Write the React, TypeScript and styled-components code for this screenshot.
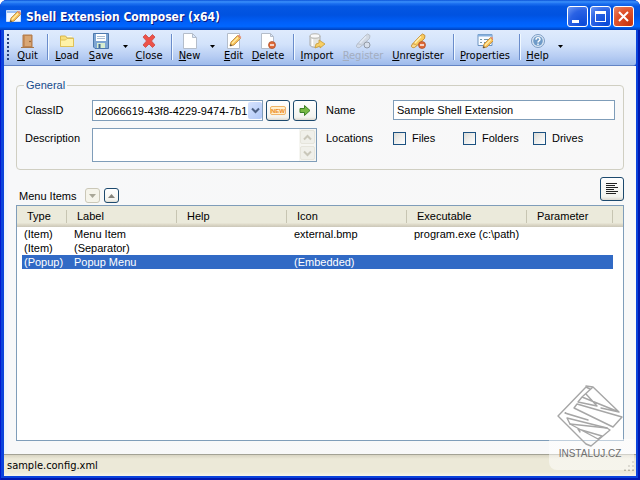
import React from "react";
import styled, { createGlobalStyle, css } from "styled-components";

const GlobalStyle = createGlobalStyle`
  * { box-sizing: border-box; }
  html, body { margin: 0; padding: 0; background: #ffffff; }
  body, button, input, select, textarea, table {
    font-family: "Liberation Sans", Arial, sans-serif;
    font-size: 11px;
    line-height: 14px;
    color: #000000;
  }
`;

const uiFont = `"DejaVu Sans Condensed", "DejaVu Sans", sans-serif`;

const Window = styled.div`
  position: relative;
  display: flex;
  flex-direction: column;
  min-height: 100vh;
  padding: 0 4px 4px;
  border-radius: 7px 7px 0 0;
  background: #0b43dc;
  box-shadow: inset 1px 0 #0019cf, inset -2px 0 #0019b0, inset 0 -2px #0019b0;
`;

const TitleBar = styled.header`
  display: flex;
  align-items: center;
  gap: 4px;
  height: 30px;
  margin: 0 -4px;
  padding: 3px 6px 0;
  border-radius: 7px 7px 0 0;
  background: linear-gradient(
    #0a52d8 0%, #3a90fb 6%, #1c70f0 12%, #0457e2 22%, #0052e0 50%, #0060fa 75%, #0066ff 88%, #0049cc 97%, #003fb8 100%
  );
`;

const Title = styled.h1`
  flex: 1;
  margin: 0;
  color: #ffffff;
  font-family: ${uiFont};
  font-size: 12px;
  font-weight: 700;
  line-height: 18px;
  text-shadow: 1px 1px #0a1883;
  white-space: nowrap;
`;

const Captions = styled.div`
  display: flex;
  gap: 2px;
`;

const CaptionButton = styled.button<{ $close?: boolean }>`
  display: flex;
  width: 21px;
  height: 21px;
  padding: 0;
  border: 1px solid #ffffff;
  border-radius: 3px;
  background: ${(p) =>
    p.$close
      ? "radial-gradient(circle at 80% 90%, #c8340f, #e0532c 60%, #e88a6c)"
      : "radial-gradient(circle at 80% 90%, #0a4ad8, #2a62e4 60%, #6f9af5)"};
`;

const ToolBar = styled.nav`
  display: flex;
  align-items: stretch;
  height: 36px;
  padding: 3px 0 2px 3px;
  border-bottom: 1px solid #6384c4;
  border-radius: 0 0 3px 0;
  background: linear-gradient(#dfebfd 0%, #d3e3fb 40%, #b7cdf3 75%, #9ebbeb 100%);
`;

const Grip = styled.span`
  width: 2px;
  height: 28px;
  margin: 1px 4px 0 0;
  background: repeating-linear-gradient(#27417c 0 2px, transparent 2px 4px);
`;

const ToolButton = styled.button<{ $width: number }>`
  display: flex;
  flex: none;
  flex-direction: column;
  align-items: center;
  width: ${(p) => p.$width}px;
  padding: 0;
  border: 0;
  background: none;
  font-family: ${uiFont};
  white-space: nowrap;

  & svg { flex: none; }
  &:disabled { color: #a3adbf; }
  &:disabled svg { filter: grayscale(1); opacity: 0.5; }
`;

const Key = styled.u`
  text-decoration-thickness: 1px;
  text-underline-offset: 1px;
`;

const DropButton = styled.button`
  flex: none;
  width: 14px;
  padding: 0 0 4px;
  border: 0;
  background: none;
  line-height: 0;
`;

const Divider = styled.span`
  flex: none;
  width: 2px;
  margin: 1px 1px 3px 5px;
  border-left: 1px solid #6a8ccb;
  border-right: 1px solid #f1f9ff;
`;

const Main = styled.main`
  display: flex;
  flex: 1;
  flex-direction: column;
  padding: 12px 12px 13px;
  background: linear-gradient(90deg, #e9f3fc 0, #f7f8f9 5px, #f8f8f8 100%);
`;

const Group = styled.fieldset`
  display: grid;
  grid-template-columns: 67px 225px 76px minmax(0, 1fr);
  row-gap: 7px;
  min-width: 0;
  margin: 0;
  padding: 8px 8px 7px;
  border: 1px solid #d0cfc2;
  border-radius: 4px;
`;

const Legend = styled.legend`
  margin-left: -1px;
  padding: 0 2px;
  color: #154a8b;
`;

const Label = styled.label<{ $indent?: boolean }>`
  padding: 3px 0 3px ${(p) => (p.$indent ? 9 : 0)}px;
`;

const Caption = styled.span`
  padding: 3px 0 3px 9px;
`;

const field = css`
  border: 1px solid #7f9db9;
  border-radius: 0;
  background: #ffffff;
  outline: 0;
`;

const TextBox = styled.input`
  ${field}
  width: 100%;
  height: 20px;
  padding: 0 3px;
`;

const ClassRow = styled.div`
  display: flex;
  gap: 3px;
`;

const Combo = styled.div`
  position: relative;
  flex: 1;
  min-width: 0;
  height: 21px;
`;

const Select = styled.select`
  ${field}
  width: 100%;
  height: 21px;
  padding: 0 14px 0 2px;
  appearance: none;
`;

const ComboArrow = styled.span`
  position: absolute;
  top: 2px;
  right: 1px;
  display: flex;
  width: 14px;
  height: 17px;
  align-items: center;
  justify-content: center;
  border-radius: 2px;
  background: linear-gradient(135deg, #d6e3fe, #b0c8f8);
  pointer-events: none;
`;

const Memo = styled.div`
  position: relative;
  height: 34px;
`;

const TextArea = styled.textarea`
  ${field}
  display: block;
  width: 100%;
  height: 34px;
  padding: 2px 20px 2px 3px;
  resize: none;
  overflow: hidden;
`;

const ScrollBar = styled.div`
  position: absolute;
  inset: 1px 1px 1px auto;
  display: flex;
  flex-direction: column;
  width: 17px;
  background: #f6f6f2;
`;

const ScrollButton = styled.button`
  display: flex;
  flex: 1;
  align-items: center;
  justify-content: center;
  margin: 1px;
  padding: 0;
  border: 1px solid #e6e5dc;
  border-radius: 2px;
  background: #f0f0ea;
`;

const PushButton = styled.button<{ $width: number; $height: number }>`
  display: flex;
  flex: none;
  align-items: center;
  justify-content: center;
  width: ${(p) => p.$width}px;
  height: ${(p) => p.$height}px;
  padding: 0;
  border: 1px solid #1d4a6e;
  border-radius: 3px;
  background: linear-gradient(#ffffff, #f3f3ee 85%, #dcd9cf);

  &:disabled { border-color: #cbc8b8; background: #f5f4ea; }
`;

const Checks = styled.div`
  display: flex;
  padding: 3px 0;
`;

const CheckLabel = styled.label`
  display: flex;
  align-items: center;
  gap: 6px;
  width: 70px;
  height: 14px;
`;

const CheckBox = styled.input`
  width: 13px;
  height: 13px;
  margin: 0;
  appearance: none;
  border: 1px solid #1c5180;
  background: linear-gradient(135deg, #dcdcd7, #ffffff);
`;

const ListBar = styled.div`
  display: flex;
  align-items: flex-end;
  gap: 4px;
  height: 26px;
  margin: 7px 0 2px;
  padding-left: 3px;
`;

const ListTitle = styled.h2`
  width: 62px;
  margin: 0;
  font-size: 11px;
  font-weight: 400;
  line-height: 14px;
`;

const BarEnd = styled.div`
  display: flex;
  flex: 1;
  align-self: flex-start;
  justify-content: flex-end;
`;

const ListView = styled.div`
  flex: 1;
  border: 1px solid #7f9db9;
  background: #ffffff;
  overflow: hidden;
`;

const Table = styled.table`
  width: 100%;
  table-layout: fixed;
  border-collapse: separate;
  border-spacing: 0;
  white-space: nowrap;
`;

const HeadCell = styled.th<{ $width?: number }>`
  width: ${(p) => (p.$width ? `${p.$width}px` : "auto")};
  height: 21px;
  padding: 1px 0 2px 10px;
  background:
    linear-gradient(#c7c5b2, #c7c5b2) right 4px / 1px 13px no-repeat,
    linear-gradient(#ebeadb 80%, #dedac9 88%, #cbc7b8);
  font-weight: 400;
  text-align: left;
`;

const HeadEnd = styled.th`
  width: 10px;
  padding: 0;
  background: linear-gradient(#ebeadb 80%, #dedac9 88%, #cbc7b8);
`;

const Row = styled.tr<{ $selected: boolean }>`
  color: ${(p) => (p.$selected ? "#ffffff" : "#000000")};
  background: ${(p) => (p.$selected ? "#316ac5" : "#ffffff")};
`;

const Cell = styled.td`
  height: 14px;
  padding: 0 0 0 7px;

  &:first-child { padding-left: 2px; border-left: 5px solid #ffffff; }
`;

const EndCell = styled.td`
  padding: 0;
  background: #ffffff;
`;

const StatusBar = styled.footer`
  display: flex;
  align-items: center;
  justify-content: space-between;
  height: 22px;
  padding: 1px 0 0 3px;
  border-top: 1px solid #a3a295;
  background: linear-gradient(#d8d4c2 0, #ece9d8 4px, #ece9d8 17px, #f5f4ec 100%);
  font-family: ${uiFont};
`;

const Watermark = styled.aside`
  position: absolute;
  right: 0;
  bottom: 10px;
  display: flex;
  flex-direction: column;
  align-items: center;
  width: 91px;
  padding: 0 9px 9px 0;
  border-radius: 8px;
  background: linear-gradient(transparent 54px, rgba(255, 255, 255, 0.5) 54px) left / 85px 100% no-repeat;
  color: #6e6e6e;
  font-size: 10px;
  line-height: 14px;
  pointer-events: none;
`;

const Pencil = () => (
  <>
    <path d="M4 13l1-4 6.5-6.5 3 3L8 12z" fill="#f8bf58" stroke="#b98536" strokeWidth=".8" />
    <path d="M6 10.500l6-6" stroke="#fff0a8" strokeWidth="1.300" />
    <path d="M11.500 2.500l3 3 .8-1.500-2.200-2.200z" fill="#e7907a" />
    <path d="M4 13l.6-2 1.500 1.400z" fill="#444" />
  </>
);

const Minus = () => (
  <>
    <circle cx="12" cy="12" r="3.500" fill="#df6a38" stroke="#a84a25" strokeWidth=".7" />
    <path d="M10 12h4" stroke="#fff" strokeWidth="1.400" />
  </>
);

const Form = () => (
  <>
    <path d="M1 1.500h14v11H1z" fill="#f8fbff" stroke="#6b93c0" />
    <path d="M1 1.500h14v2H1z" fill="#86b0df" />
    <path d="M3 6.500h2M3 9.500h2M7 6.500h6M7 9.500h4" stroke="#7397a8" />
  </>
);

const Plug = () => (
  <>
    <path d="M2.500 11l7.500-8 2.500-2 2.500 1.500-.5 3L7 12.500z" fill="#f9ca5e" stroke="#c58f35" />
    <path d="M5 10l6-6.500" stroke="#fff1b4" strokeWidth="1.500" />
    <path d="M2.500 11c-2.500 3 0 4 2 3.500L7 12.500" fill="#f9d98a" stroke="#c58f35" />
  </>
);

const icons: Record<string, React.ReactNode> = {
  Quit: (
    <>
      <path d="M3 2h9v12H3z" fill="#c98e5b" stroke="#b27b48" />
      <path d="M5 3h6v10H5z" fill="#d9a774" />
      <path d="M1 14.500h13" stroke="#a7794d" />
      <circle cx="10" cy="8.500" r=".8" fill="#7d522d" />
    </>
  ),
  Load: (
    <>
      <path d="M1.500 13.500V3h5l1.500 2h6.500v8.500z" fill="#f7df7b" stroke="#d9b64c" />
      <path d="M1.500 13.500V7h5l1.500-1.500h6.500v8z" fill="#fff2a8" stroke="#dfc158" />
      <path d="M8 3.500h5" stroke="#fffbe0" />
    </>
  ),
  Save: (
    <>
      <path d="M.5.5h15v15H2l-1.500-1.500z" fill="#7ea6d3" stroke="#4d79ad" />
      <path d="M3 1h10v7H3z" fill="#fff" />
      <path d="M4 3.500h8M4 5.500h8" stroke="#a8bed3" />
      <path d="M4 10h8v5H4z" fill="#d8eed0" />
      <path d="M5.500 11h2v4h-2z" fill="#3e6798" />
    </>
  ),
  Close: (
    <path d="M2 4l2.500-2.500L8 5l3.500-3.500L14 4l-3.500 4 3.500 4-2.500 2.500L8 11l-3.500 3.500L2 12l3.500-4z" fill="#ed5149" stroke="#c84a45" strokeWidth=".8" />
  ),
  New: <path d="M1.500.5h9l4 4v11h-13zM10.500.5v4h4" fill="#fff" stroke="#b4bdca" />,
  Edit: (
    <>
      <path d="M1.500.5h12v15h-12z" fill="#fff" stroke="#b4bdca" />
      <Pencil />
    </>
  ),
  Delete: (
    <>
      <path d="M1.500.5h9l3 3v12h-12zM10.500.5v3h3" fill="#fff" stroke="#b4bdca" />
      <Minus />
    </>
  ),
  Import: (
    <>
      <path d="M1 3v9c0 3 10 3 10 0V3" fill="#e4e4df" stroke="#aaa" />
      <ellipse cx="6" cy="3" rx="5" ry="2.200" fill="#fafafa" stroke="#b2b2ad" />
      <path d="M3.500 6v7" stroke="#fff" strokeWidth="1.500" />
      <path d="M6 15l1-4 3-1V7l6 4-5 4v-2z" fill="#f8cf65" stroke="#c79a34" strokeWidth=".8" />
    </>
  ),
  Register: (
    <>
      <Plug />
      <circle cx="12" cy="12" r="3" fill="#ddd" stroke="#555" />
    </>
  ),
  Unregister: (
    <>
      <Plug />
      <Minus />
    </>
  ),
  Properties: (
    <>
      <Form />
      <g transform="translate(2 2)">
        <Pencil />
      </g>
    </>
  ),
  Help: (
    <>
      <circle cx="8" cy="8" r="6.500" fill="#dce8f5" stroke="#7c9cc3" />
      <circle cx="8" cy="8" r="4.800" fill="#6f9bc8" />
      <path d="M6 6.800c0-3 4-2.600 4-.4C10 8 8 7.800 8 9.400M8 10.500v1.500" fill="none" stroke="#fff" strokeWidth="1.400" />
    </>
  ),
};

const Icon = ({ name }: { name: string }) => (
  <svg width="16" height="16" viewBox="0 0 16 16" aria-hidden="true">
    {icons[name]}
  </svg>
);

type ToolItem = { label: string; width: number; menu?: boolean; disabled?: boolean; divider?: boolean };

const tools: ToolItem[] = [
  { label: "Quit", width: 29, divider: true },
  { label: "Load", width: 34 },
  { label: "Save", width: 34, menu: true },
  { label: "Close", width: 34, divider: true },
  { label: "New", width: 31, menu: true },
  { label: "Edit", width: 29 },
  { label: "Delete", width: 40, divider: true },
  { label: "Import", width: 42 },
  { label: "Register", width: 50, disabled: true },
  { label: "Unregister", width: 60, divider: true },
  { label: "Properties", width: 58, divider: true },
  { label: "Help", width: 31, menu: true },
];

const columns = [
  { title: "Type", width: 50 },
  { title: "Label", width: 110 },
  { title: "Help", width: 110 },
  { title: "Icon", width: 120 },
  { title: "Executable", width: 120 },
  { title: "Parameter" },
];

const rows = [
  ["(Item)", "Menu Item", "", "external.bmp", "program.exe (c:\\path)", ""],
  ["(Item)", "(Separator)", "", "", "", ""],
  ["(Popup)", "Popup Menu", "", "(Embedded)", "", ""],
];

const Chevron = ({ up, color }: { up?: boolean; color: string }) => (
  <svg width="9" height="7" viewBox="0 0 9 7" aria-hidden="true">
    <path d={up ? "M1 5.500l3.500-3.500L8 5.500" : "M1 1.500L4.500 5 8 1.500"} fill="none" stroke={color} strokeWidth="2" />
  </svg>
);

const Triangle = ({ up, color }: { up?: boolean; color: string }) => (
  <svg width="7" height="4" viewBox="0 0 7 4" aria-hidden="true">
    <path d={up ? "M0 4h7L3.500 0z" : "M0 0h7L3.500 4z"} fill={color} />
  </svg>
);

export default function App() {
  return (
    <>
      <GlobalStyle />
      <Window>
        <TitleBar>
          <svg width="16" height="16" viewBox="0 0 16 16" aria-hidden="true">
            <path d="M.5 1.500h14v11H.5z" fill="#f5f8ff" stroke="#c8dcfa" />
            <path d="M1 2h13v2H1z" fill="#9bc1f5" />
            <Pencil />
          </svg>
          <Title>Shell Extension Composer (x64)</Title>
          <Captions>
            <CaptionButton aria-label="Minimize">
              <svg width="19" height="19" viewBox="0 0 19 19">
                <path d="M4 13h7v3H4z" fill="#fff" />
              </svg>
            </CaptionButton>
            <CaptionButton aria-label="Maximize">
              <svg width="19" height="19" viewBox="0 0 19 19">
                <path d="M4 4h11v11H4zM5 7v7h9V7z" fill="#fff" fillRule="evenodd" />
              </svg>
            </CaptionButton>
            <CaptionButton $close aria-label="Close window">
              <svg width="19" height="19" viewBox="0 0 19 19">
                <path d="M5 5l9 9M14 5l-9 9" stroke="#fff" strokeWidth="2" />
              </svg>
            </CaptionButton>
          </Captions>
        </TitleBar>

        <ToolBar>
          <Grip />
          {tools.map((t) => (
            <React.Fragment key={t.label}>
              <ToolButton $width={t.width} disabled={t.disabled}>
                <Icon name={t.label} />
                <span>
                  <Key>{t.label[0]}</Key>
                  {t.label.slice(1)}
                </span>
              </ToolButton>
              {t.menu && (
                <DropButton aria-label={`${t.label} options`}>
                  <svg width="5" height="3" viewBox="0 0 5 3">
                    <path d="M0 0h5L2.500 3z" />
                  </svg>
                </DropButton>
              )}
              {t.divider && <Divider />}
            </React.Fragment>
          ))}
        </ToolBar>

        <Main>
          <Group>
            <Legend>General</Legend>
            <Label htmlFor="classid">ClassID</Label>
            <ClassRow>
              <Combo>
                <Select id="classid">
                  <option>d2066619-43f8-4229-9474-7b1</option>
                </Select>
                <ComboArrow>
                  <Chevron color="#4d6185" />
                </ComboArrow>
              </Combo>
              <PushButton $width={24} $height={21} aria-label="New ClassID">
                <svg width="16" height="9" viewBox="0 0 16 9">
                  <rect x=".5" y=".5" width="15" height="8" rx="1.500" fill="#fff0cf" stroke="#f0b568" />
                  <text x="8" y="7" textAnchor="middle" fontSize="6" fontWeight="700" fill="#ec8a1c">NEW</text>
                </svg>
              </PushButton>
              <PushButton $width={24} $height={21} aria-label="Go to ClassID">
                <svg width="12" height="11" viewBox="0 0 12 11">
                  <path d="M1 3.500h4.500v-3L11 5.500l-5.500 5v-3H1z" fill="#77b943" stroke="#3d8127" />
                </svg>
              </PushButton>
            </ClassRow>
            <Label htmlFor="name" $indent>Name</Label>
            <TextBox id="name" defaultValue="Sample Shell Extension" />

            <Label htmlFor="description">Description</Label>
            <Memo>
              <TextArea id="description" />
              <ScrollBar>
                <ScrollButton disabled aria-label="Scroll up">
                  <Chevron up color="#c9c7ba" />
                </ScrollButton>
                <ScrollButton disabled aria-label="Scroll down">
                  <Chevron color="#c9c7ba" />
                </ScrollButton>
              </ScrollBar>
            </Memo>
            <Caption>Locations</Caption>
            <Checks>
              {["Files", "Folders", "Drives"].map((name) => (
                <CheckLabel key={name}>
                  <CheckBox type="checkbox" />
                  {name}
                </CheckLabel>
              ))}
            </Checks>
          </Group>

          <ListBar>
            <ListTitle>Menu Items</ListTitle>
            <PushButton $width={15} $height={15} disabled aria-label="Move down">
              <Triangle color="#a9a797" />
            </PushButton>
            <PushButton $width={15} $height={15} aria-label="Move up">
              <Triangle up color="#85837a" />
            </PushButton>
            <BarEnd>
              <PushButton $width={24} $height={24} aria-label="List options">
                <svg width="13" height="12" viewBox="0 0 13 12">
                  <path d="M0 .5h11M0 2.500h9M0 4.500h12M0 6.500h8M0 8.500h12M0 10.500h10" stroke="#222" />
                </svg>
              </PushButton>
            </BarEnd>
          </ListBar>

          <ListView>
            <Table>
              <thead>
                <tr>
                  {columns.map((c) => (
                    <HeadCell key={c.title} $width={c.width}>{c.title}</HeadCell>
                  ))}
                  <HeadEnd />
                </tr>
              </thead>
              <tbody>
                {rows.map((r, i) => (
                  <Row key={i} $selected={i === 2}>
                    {r.map((text, j) => (
                      <Cell key={j}>{text}</Cell>
                    ))}
                    <EndCell />
                  </Row>
                ))}
              </tbody>
            </Table>
          </ListView>
        </Main>

        <StatusBar>
          <span>sample.config.xml</span>
          <svg width="12" height="12" viewBox="0 0 12 12" aria-hidden="true">
            <path d="M8 1h2v2H8zM4 5h2v2H4zM8 5h2v2H8zM0 9h2v2H0zM4 9h2v2H4zM8 9h2v2H8z" fill="#b8b4a2" />
          </svg>
        </StatusBar>

        <Watermark>
          <svg width="66" height="62" viewBox="0 -1 66 62" aria-hidden="true">
            <g fill="none" stroke="#a6a6a6" strokeWidth="1.400" strokeLinejoin="round" strokeLinecap="round">
              <path d="M33 3L29 1 1 30l28 28 5 2 19-16-3-2-40-10 3 6 28 15 4-3-24-7 2 3" />
              <path d="M36 1L25 11l37 15zM36 1l-7-1M62 26l-18-4M29 8l11 12-19-4 4-5" />
              <path d="M17 22l39 19 9-10-45-13z" />
              <path d="M8 27l23 7-20-6zM13 38l37 4" />
            </g>
          </svg>
          <span>INSTALUJ.CZ</span>
        </Watermark>
      </Window>
    </>
  );
}
